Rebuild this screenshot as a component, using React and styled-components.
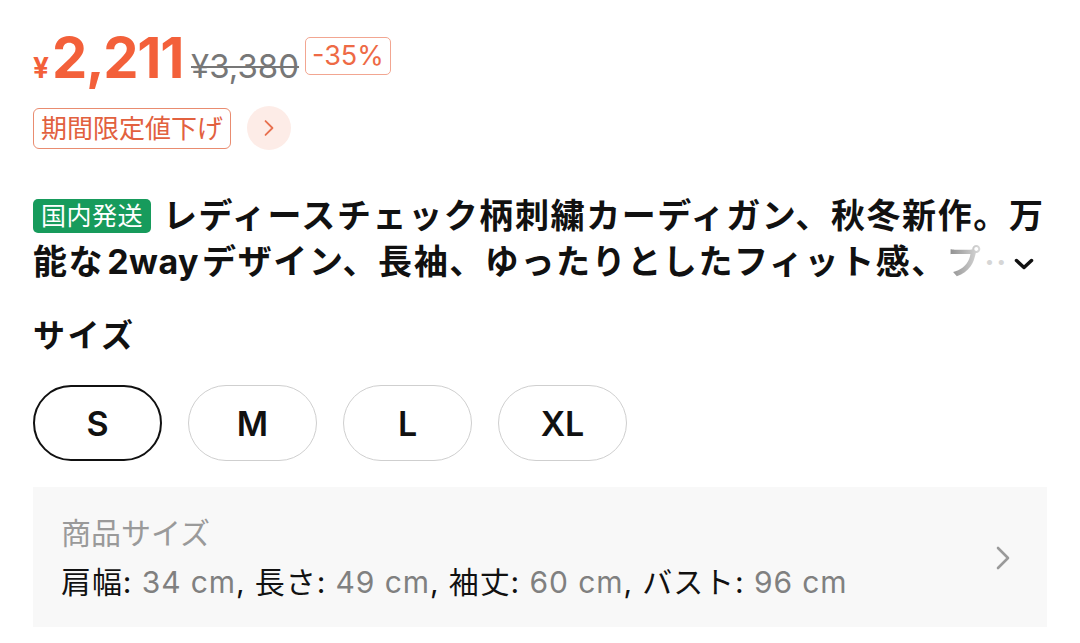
import React from "react";
import styled, { createGlobalStyle } from "styled-components";

const GlobalStyle = createGlobalStyle`
  body {
    margin: 0;
    background: #ffffff;
    font-family: "Inter", "Noto Sans CJK JP", sans-serif;
    color: #111111;
  }
`;

const sizes = ["S", "M", "L", "XL"];

const specs = [
  { label: "肩幅", value: "34 cm" },
  { label: "長さ", value: "49 cm" },
  { label: "袖丈", value: "60 cm" },
  { label: "バスト", value: "96 cm" },
];

const ChevronRight = ({ color = "#999", width = 16, height = 26, stroke = 3 }) => (
  <svg width={width} height={height} viewBox="0 0 16 26" fill="none">
    <path
      d="M3 3 L13 13 L3 23"
      stroke={color}
      strokeWidth={stroke}
      strokeLinecap="round"
      strokeLinejoin="round"
    />
  </svg>
);

const ChevronDown = () => (
  <svg width="20" height="12" viewBox="0 0 20 12" fill="none">
    <path
      d="M2.5 2.5 L10 9.5 L17.5 2.5"
      stroke="#111"
      strokeWidth="3.5"
      strokeLinecap="round"
      strokeLinejoin="round"
    />
  </svg>
);

const App = () => {
  return (
    <>
      <GlobalStyle />
      <Page>
        <PriceRow>
          <Yen>¥</Yen>
          <Price>2,211</Price>
          <OldPrice>¥3,380</OldPrice>
          <DiscountTag>-35%</DiscountTag>
        </PriceRow>

        <PromoRow>
          <PromoTag>期間限定値下げ</PromoTag>
          <RoundButton>
            <ChevronRight color="#E8704F" width={12} height={18} stroke={2.6} />
          </RoundButton>
        </PromoRow>

        <Title>
          <TitleLine>
            <ShipTag>国内発送</ShipTag>
            レディースチェック柄刺繍カーディガン、秋冬新作。万
          </TitleLine>
          <TitleLine>
            能な<Latin>2way</Latin>デザイン、長袖、ゆったりとしたフィット感、
            <Fade>プ</Fade>
            <Dots>··</Dots>
            <ExpandIcon>
              <ChevronDown />
            </ExpandIcon>
          </TitleLine>
        </Title>

        <SizeLabel>サイズ</SizeLabel>
        <SizeRow>
          {sizes.map((s, i) => (
            <SizeChip key={s} $active={i === 0}>
              {s}
            </SizeChip>
          ))}
        </SizeRow>

        <SpecPanel>
          <div>
            <SpecTitle>商品サイズ</SpecTitle>
            <SpecLine>
              {specs.map((item, i) => (
                <React.Fragment key={item.label}>
                  {item.label}: <SpecValue>{item.value}</SpecValue>
                  {i < specs.length - 1 ? ", " : ""}
                </React.Fragment>
              ))}
            </SpecLine>
          </div>
          <ChevronRight color="#9a9a9a" width={16} height={26} stroke={2.6} />
        </SpecPanel>
      </Page>
    </>
  );
};

export default App;

const Page = styled.div`
  padding: 30px 33px 0;
  box-sizing: border-box;
  width: 1080px;
`;

const PriceRow = styled.div`
  display: flex;
  align-items: baseline;
  height: 56px;
  color: #f3603a;
`;

const Yen = styled.span`
  font-size: 28px;
  font-weight: 700;
  margin-right: 3px;
`;

const Price = styled.span`
  font-size: 56px;
  line-height: 56px;
  font-weight: 700;
  letter-spacing: -1.3px;
`;

const OldPrice = styled.span`
  font-size: 33px;
  color: #777777;
  text-decoration: line-through;
  text-decoration-thickness: 2px;
  margin-left: 8px;
`;

const DiscountTag = styled.span`
  align-self: flex-start;
  margin-top: 7px;
  margin-left: 6px;
  border: 1.5px solid #f2a691;
  border-radius: 5px;
  padding: 0 6px;
  font-size: 27px;
  line-height: 36px;
  color: #ee6a45;
`;

const PromoRow = styled.div`
  display: flex;
  align-items: center;
  gap: 16px;
  margin-top: 20px;
`;

const PromoTag = styled.span`
  border: 1.5px solid #e98c70;
  border-radius: 6px;
  padding: 0 7px;
  font-size: 26px;
  line-height: 39px;
  color: #e2613f;
`;

const RoundButton = styled.span`
  width: 44px;
  height: 44px;
  border-radius: 50%;
  background: #fdece7;
  display: flex;
  align-items: center;
  justify-content: center;
`;

const Title = styled.div`
  margin-top: 43px;
  font-size: 34px;
  font-weight: 700;
  line-height: 46px;
  letter-spacing: 1.6px;
  color: #111111;
`;

const TitleLine = styled.div`
  display: flex;
  align-items: center;
  white-space: nowrap;
`;

const ShipTag = styled.span`
  background: #179b5c;
  color: #ffffff;
  font-size: 25px;
  font-weight: 400;
  line-height: 34px;
  letter-spacing: 0.5px;
  padding: 0 8px;
  border-radius: 5px;
  margin-right: 12px;
`;

const Latin = styled.span`
  margin: 0 3px;
  letter-spacing: 0.5px;
`;

const Fade = styled.span`
  background: linear-gradient(to right, #8a8a8a, #e0e0e0);
  -webkit-background-clip: text;
  background-clip: text;
  color: transparent;
`;

const Dots = styled.span`
  color: #d6d6d6;
  font-size: 30px;
  margin-left: 2px;
`;

const ExpandIcon = styled.span`
  display: flex;
  margin-left: 6px;
  margin-top: 4px;
`;

const SizeLabel = styled.div`
  margin-top: 28px;
  font-size: 32px;
  font-weight: 700;
  line-height: 46px;
  letter-spacing: 2.5px;
`;

const SizeRow = styled.div`
  display: flex;
  gap: 26px;
  margin-top: 26px;
`;

const SizeChip = styled.div`
  width: 129px;
  height: 76px;
  box-sizing: border-box;
  border-radius: 38px;
  border: ${(p) => (p.$active ? "2.5px solid #111111" : "1px solid #cfcfcf")};
  display: flex;
  align-items: center;
  justify-content: center;
  font-size: 34px;
  font-weight: 600;
  color: #111111;
`;

const SpecPanel = styled.div`
  margin-top: 26px;
  background: #f8f8f8;
  padding: 26px 36px 25px 28px;
  display: flex;
  align-items: center;
  justify-content: space-between;
`;

const SpecTitle = styled.div`
  font-size: 30px;
  line-height: 40px;
  color: #9a9a9a;
`;

const SpecLine = styled.div`
  margin-top: 9px;
  font-size: 30px;
  line-height: 40px;
  letter-spacing: 0.9px;
  color: #111111;
`;

const SpecValue = styled.span`
  color: #808080;
`;
